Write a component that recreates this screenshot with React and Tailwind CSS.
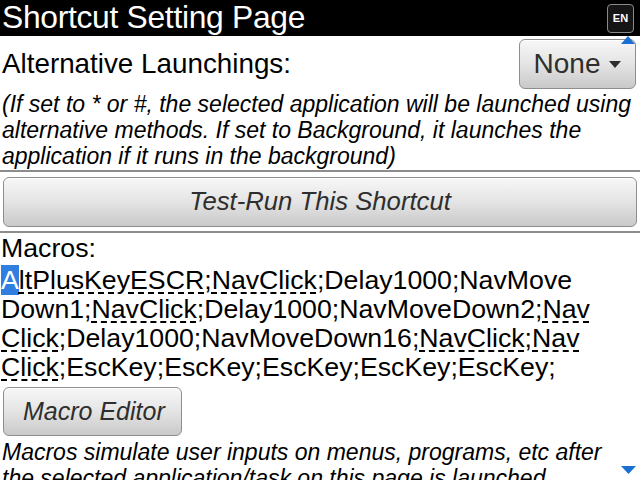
import React from 'react';

const font = { fontFamily: '"Liberation Sans", Arial, sans-serif' };

function Btn({ children, className = '' }) {
  return (
    <div
      className={`flex items-center rounded-[6px] border border-[#8e8e8e] bg-gradient-to-b from-[#f7f7f7] via-[#e4e4e4] to-[#c9c9c9] shadow-[inset_0_1px_0_#ffffff] text-[#2e2e2e] ${className}`}
    >
      {children}
    </div>
  );
}

function U({ children }) {
  return <span className="underline decoration-dashed decoration-[1.5px] underline-offset-[3px]">{children}</span>;
}

export default function App() {
  return (
    <div className="w-[640px] h-[480px] overflow-hidden bg-white text-black relative" style={font}>
      {/* title bar */}
      <div className="h-[36px] bg-black flex items-center justify-between pl-[2px] pr-[6px]">
        <span className="text-white text-[31.8px] leading-none tracking-[-0.3px]">Shortcut Setting Page</span>
        <div className="w-[27px] h-[29px] rounded-[4px] border border-[#8a8a8a] bg-[#151515] flex items-center justify-center">
          <span className="text-white text-[11px] font-bold">EN</span>
        </div>
      </div>
      {/* scroll up indicator */}
      <svg className="absolute left-[621px] top-[36px]" width="14" height="8" viewBox="0 0 14 8">
        <path d="M7 0 L14 8 L0 8 Z" fill="#1b6fd1" />
      </svg>

      <div className="flex items-center justify-between pl-[2px] pr-[4px] pt-[3px]">
        <span className="text-[27.8px] leading-none">Alternative Launchings:</span>
        <Btn className="w-[117px] h-[50px] justify-center gap-[9px]">
          <span className="text-[28px] leading-none">None</span>
          <svg width="12" height="7" viewBox="0 0 12 7">
            <path d="M0 0 L12 0 L6 7 Z" fill="#2e2e2e" />
          </svg>
        </Btn>
      </div>

      <div className="pl-[2px] pt-[2px] italic text-[23px] leading-[26px] whitespace-nowrap">
        <div>(If set to * or #, the selected application will be launched using</div>
        <div>alternative methods. If set to Background, it launches the</div>
        <div>application if it runs in the background)</div>
      </div>

      <div className="h-[2px] bg-[#8c8c8c] mt-[1px]" />

      <div className="px-[3px] pt-[5px] pb-[4px]">
        <Btn className="h-[50px] justify-center">
          <span className="italic text-[25.7px] leading-none">Test-Run This Shortcut</span>
        </Btn>
      </div>

      <div className="h-[2px] bg-[#8c8c8c]" />

      <div className="pl-[1px] text-[26.7px] leading-[29px] whitespace-nowrap">
        <div className="pt-[1px]">Macros:</div>
        <div className="pt-[3px]">
          <span className="bg-[#2f7ee0] text-white underline decoration-dashed decoration-[#2f7ee0] decoration-[1.5px] underline-offset-[3px]">A</span>
          <U>ltPlusKeyESCR</U>;<U>NavClick</U>;Delay1000;NavMove
        </div>
        <div>
          Down1;<U>NavClick</U>;Delay1000;NavMoveDown2;<U>Nav</U>
        </div>
        <div>
          <U>Click</U>;Delay1000;NavMoveDown16;<U>NavClick</U>;<U>Nav</U>
        </div>
        <div>
          <U>Click</U>;EscKey;EscKey;EscKey;EscKey;EscKey;
        </div>
      </div>

      <div className="pl-[3px] pt-[5px]">
        <Btn className="w-[179px] h-[49px] pl-[19px]">
          <span className="italic text-[25px] leading-none">Macro Editor</span>
        </Btn>
      </div>

      <div className="pl-[2px] pt-[3px] italic text-[23px] leading-[26px] whitespace-nowrap">
        <div>Macros simulate user inputs on menus, programs, etc after</div>
        <div>the selected application/task on this page is launched</div>
      </div>

      {/* scroll down indicator */}
      <svg className="absolute left-[621px] top-[466px]" width="15" height="8" viewBox="0 0 15 8">
        <path d="M0 0 L15 0 L7.5 8 Z" fill="#1b6fd1" />
      </svg>
    </div>
  );
}
